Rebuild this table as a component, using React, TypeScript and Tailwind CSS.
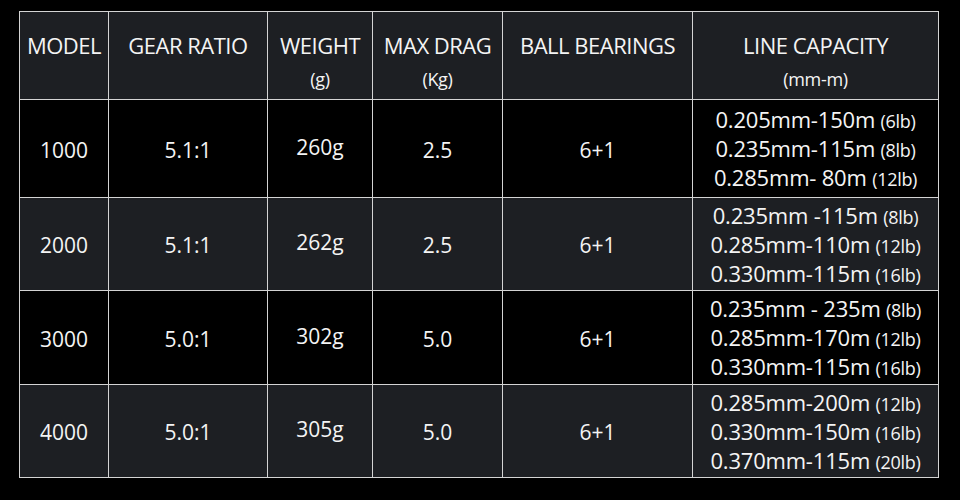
const headers = [
    { title: "MODEL", sub: "" },
    { title: "GEAR RATIO", sub: "" },
    { title: "WEIGHT", sub: "(g)" },
    { title: "MAX DRAG", sub: "(Kg)" },
    { title: "BALL BEARINGS", sub: "" },
    { title: "LINE CAPACITY", sub: "(mm-m)" },
];

const rows = [
    {
        model: "1000", ratio: "5.1:1", weight: "260g", drag: "2.5", bearings: "6+1", h: "h-[98px]", dark: false,
        lines: [["0.205mm-150m", "(6lb)"], ["0.235mm-115m", "(8lb)"], ["0.285mm- 80m", "(12lb)"]],
    },
    {
        model: "2000", ratio: "5.1:1", weight: "262g", drag: "2.5", bearings: "6+1", h: "h-[93px]", dark: true,
        lines: [["0.235mm -115m", "(8lb)"], ["0.285mm-110m", "(12lb)"], ["0.330mm-115m", "(16lb)"]],
    },
    {
        model: "3000", ratio: "5.0:1", weight: "302g", drag: "5.0", bearings: "6+1", h: "h-[94px]", dark: false,
        lines: [["0.235mm - 235m", "(8lb)"], ["0.285mm-170m", "(12lb)"], ["0.330mm-115m", "(16lb)"]],
    },
    {
        model: "4000", ratio: "5.0:1", weight: "305g", drag: "5.0", bearings: "6+1", h: "h-[93px]", dark: true,
        lines: [["0.285mm-200m", "(12lb)"], ["0.330mm-150m", "(16lb)"], ["0.370mm-115m", "(20lb)"]],
    },
];

const cell = "border-[1.5px] border-[#d4d4d4] text-center align-middle p-0";

export default function App() {
    return (
        <div className="w-[960px] h-[500px] bg-black pt-[11px] pl-[19px] text-[#f4f4f4] font-['Open_Sans',sans-serif]">
            <table className="border-collapse table-fixed w-[919px]">
                <colgroup>
                    <col className="w-[89px]" />
                    <col className="w-[159px]" />
                    <col className="w-[105px]" />
                    <col className="w-[130px]" />
                    <col className="w-[190px]" />
                    <col className="w-[246px]" />
                </colgroup>
                <thead>
                    <tr className="h-[88px] bg-[#1d1f23]">
                        {headers.map((h) => (
                            <th key={h.title} className={`${cell} align-top font-normal`}>
                                <div className="pt-[19px] text-[22px] leading-[28px] tracking-[-0.5px] whitespace-nowrap">{h.title}</div>
                                {h.sub && <div className="mt-[9px] text-[18px] leading-[22px] tracking-[-0.3px]">{h.sub}</div>}
                            </th>
                        ))}
                    </tr>
                </thead>
                <tbody>
                    {rows.map((r) => (
                        <tr key={r.model} className={`${r.h} ${r.dark ? "bg-[#1d1f23]" : "bg-black"} text-[21px]`}>
                            <td className={cell}><div className="pt-[4px]">{r.model}</div></td>
                            <td className={cell}><div className="pt-[4px]">{r.ratio}</div></td>
                            <td className={cell}><div className="-mt-[2px]">{r.weight}</div></td>
                            <td className={cell}><div className="pt-[4px]">{r.drag}</div></td>
                            <td className={cell}><div className="pt-[4px]">{r.bearings}</div></td>
                            <td className={cell}>
                                <div className="flex flex-col items-center pt-[2px] text-[22px] leading-[27px] tracking-[-0.2px] whitespace-pre">
                                    {r.lines.map(([a, b]) => (
                                        <div key={a}>
                                            {a} <span className="text-[18px] tracking-[-0.3px]">{b}</span>
                                        </div>
                                    ))}
                                </div>
                            </td>
                        </tr>
                    ))}
                </tbody>
            </table>
        </div>
    );
}
